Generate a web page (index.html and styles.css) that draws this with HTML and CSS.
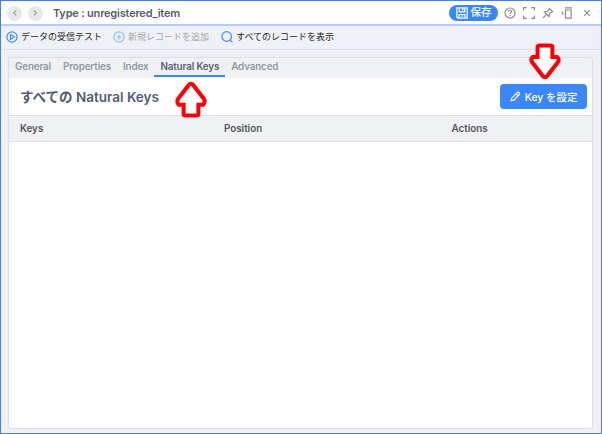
FILE: index.html
```html
<!DOCTYPE html>
<html lang="ja">
<head>
<meta charset="utf-8">
<title>Type : unregistered_item</title>
<link rel="stylesheet" href="styles.css">
</head>
<body>
<div class="window">
  <header class="titlebar">
    <span class="nav"><svg width="14" height="14" viewBox="0 0 14 14"><path d="M8.2 4.5 5.7 7l2.5 2.5"/></svg></span>
    <span class="nav"><svg width="14" height="14" viewBox="0 0 14 14"><path d="M5.8 4.5 8.3 7 5.8 9.5"/></svg></span>
    <h1>Type : unregistered_item</h1>
    <div class="controls">
      <button class="save"><svg width="12" height="12" viewBox="0 0 12 12"><path d="M.8.8h10.4v10.4H1.8l-1-1zM3.2.8v4h5.6v-4M6.8 1.5v2M3 11V7.5h6V11M4.7 9h2.6"/></svg><span>保存</span></button>
      <svg class="icon" width="12" height="12" viewBox="0 0 12 12"><circle cx="6" cy="6" r="5"/><path d="M4.5 4.8C4.5 2.6 7.7 2.8 7.5 4.8 7.4 5.8 6 5.8 6 7M6 8.1v1.1"/></svg>
      <svg class="icon" width="12" height="12" viewBox="0 0 12 12"><path d="M.6 3.5V.6h3M8.4.6h3v2.9M11.4 8.5v2.9h-3M3.6 11.4h-3V8.5"/></svg>
      <svg class="icon" width="12" height="12" viewBox="0 0 12 12"><path d="m7 1 4 4M7.7 1.7 5.4 4.4 2.4 5l4.6 4.6.6-3 2.7-2.3M4.4 7.6 1 11"/></svg>
      <svg class="icon" width="12" height="12" viewBox="0 0 12 12"><path d="M4.5 3h5.7v8.2H4.5zM3.8 .8h7.2M.6 4.8 2 6.2.6 7.6"/></svg>
      <svg class="icon close" width="8" height="8" viewBox="0 0 8 8"><path d="m1.2 1.2 5.6 5.6M6.8 1.2 1.2 6.8"/></svg>
    </div>
  </header>
  <nav class="toolbar">
    <div class="tool test"><svg width="12" height="12" viewBox="0 0 12 12"><circle cx="6" cy="6" r="5.1"/><path d="M4.5 3.5v5l4-2.5z"/></svg><span>データの受信テスト</span></div>
    <div class="tool add"><svg width="12" height="12" viewBox="0 0 12 12"><circle cx="6" cy="6" r="5.1"/><path d="M6 3.5v5M3.5 6h5"/></svg><span>新規レコードを追加</span></div>
    <div class="tool show"><svg width="12" height="12" viewBox="0 0 12 12"><circle cx="5.7" cy="5.5" r="4.8"/><path d="m9 9 2.4 2.4"/></svg><span>すべてのレコードを表示</span></div>
  </nav>
  <main class="content">
    <section class="card">
      <div class="tabs">
        <a class="tab general">General</a>
        <a class="tab properties">Properties</a>
        <a class="tab index">Index</a>
        <a class="tab active">Natural Keys</a>
        <a class="tab advanced">Advanced</a>
      </div>
      <div class="heading">
        <h2>すべての <span>Natural Keys</span></h2>
        <button class="set-key"><svg width="11" height="11" viewBox="0 0 11 11"><path d="m1.2 9.8.5-2.6 5.5-5.6c1.2-1.2 3.3.8 2.1 2L3.8 9.2zM6.2 2.7l2.1 2.1"/></svg><span>Key を設定</span></button>
      </div>
      <div class="table-head"><span>Keys</span><span>Position</span><span>Actions</span></div>
    </section>
  </main>
  <svg class="arrow arrow-up" width="34" height="38" viewBox="0 0 34 38"><path d="M17 3.7Q15.7 3.7 14.8 5L4 19Q2.4 21.5 4.8 24.8H9.6V34Q9.6 35.6 12 35.6H22Q24.4 35.6 24.4 34V24.8H29.2Q31.6 21.5 30 19L19.2 5Q18.3 3.7 17 3.7Z"/></svg>
  <svg class="arrow arrow-down" width="34" height="38" viewBox="0 0 34 38"><path d="M17 34.3Q15.7 34.3 14.8 33L4 19Q2.4 16.5 4.8 14H9.6V4Q9.6 2.4 12 2.4H22Q24.4 2.4 24.4 4V14H29.2Q31.6 16.5 30 19L19.2 33Q18.3 34.3 17 34.3Z"/></svg>
</div>
</body>
</html>
```

FILE: styles.css
```css
* { box-sizing: border-box; }
body { margin: 0; font-family: Inter, "Noto Sans CJK JP", sans-serif; }
h1, h2 { margin: 0; white-space: nowrap; }
svg { display: block; flex: none; fill: none; stroke: currentColor; stroke-width: 1.2; }
button { border: 0; font-family: inherit; color: #fff; background: #3c87f8; display: flex; align-items: center; white-space: nowrap; }

.window { position: relative; width: 602px; height: 434px; border: 1px solid #4281ee; background: #eff1f6; display: flex; flex-direction: column; overflow: hidden; }
.titlebar { height: 25px; flex: none; background: #fff; border-bottom: 2px solid #b7cdf9; display: flex; align-items: center; padding: 1px 10.5px 0 6px; }
.nav { width: 15px; height: 15px; border-radius: 50%; background: #e7e8ea; color: #a2a4a8; display: grid; place-items: center; margin-right: 5.5px; }
h1 { font-size: 11px; line-height: 14px; font-weight: 600; color: #555c70; margin-left: 5px; letter-spacing: -.2px; }
.controls { margin-left: auto; display: flex; align-items: center; gap: 7.2px; color: #8c8c8c; }
.close { margin-left: 2px; }
.save { width: 49px; height: 16px; border-radius: 8px; padding: 0 6px 0 7px; gap: 3px; margin-right: -1px; font-size: 10.5px; font-weight: 500; line-height: 16px; }

.toolbar { height: 24px; flex: none; border-bottom: 1px solid #dedfe3; display: flex; align-items: center; padding: 0 0 2px 5px; font-size: 9px; line-height: 14px; color: #24262b; }
.tool { display: flex; align-items: center; gap: 3px; white-space: nowrap; }
.tool svg { color: #438cf3; }
.tool.add { margin-left: 11px; color: #a5a7ab; }
.tool.add svg { color: #8fc2f6; }
.show { margin-left: 12px; }

.content { flex: 1; padding: 7px 8px 4px 7px; display: flex; }
.card { flex: 1; background: #fff; border: 1px solid #dedfe3; border-radius: 3px; overflow: hidden; box-shadow: 0 0 1px #d9dbe0; }
.tabs { height: 20px; background: #f0f1f5; display: flex; font-size: 9.8px; font-weight: 600; letter-spacing: -.12px; line-height: 17px; color: #9297a5; white-space: nowrap; }
.tab { padding: 0 6px; }
.active { color: #5a6277; border-bottom: 2px solid #3c87f8; height: 19px; }
.heading { height: 37px; display: flex; align-items: center; justify-content: space-between; padding: 0 5px 0 11px; }
h2 { font-size: 13.5px; line-height: 18px; font-weight: 600; color: #555c73; }
.set-key { width: 87px; height: 25px; border-radius: 4px; justify-content: center; gap: 4px; padding: 0; font-size: 10.4px; font-weight: 500; }
.table-head { height: 27px; border: solid #dddfe3; border-width: 1px 0; background: #f0f1f5; display: grid; grid-template-columns: 204px 227.5px 1fr; padding-left: 11px; align-items: center; font-size: 9.8px; font-weight: 600; color: #555; }

.arrow { position: absolute; fill: #fff; stroke: #fc0006; stroke-width: 4; }
.arrow-up { left: 173px; top: 79px; }
.arrow-down { left: 527px; top: 42px; }
```
